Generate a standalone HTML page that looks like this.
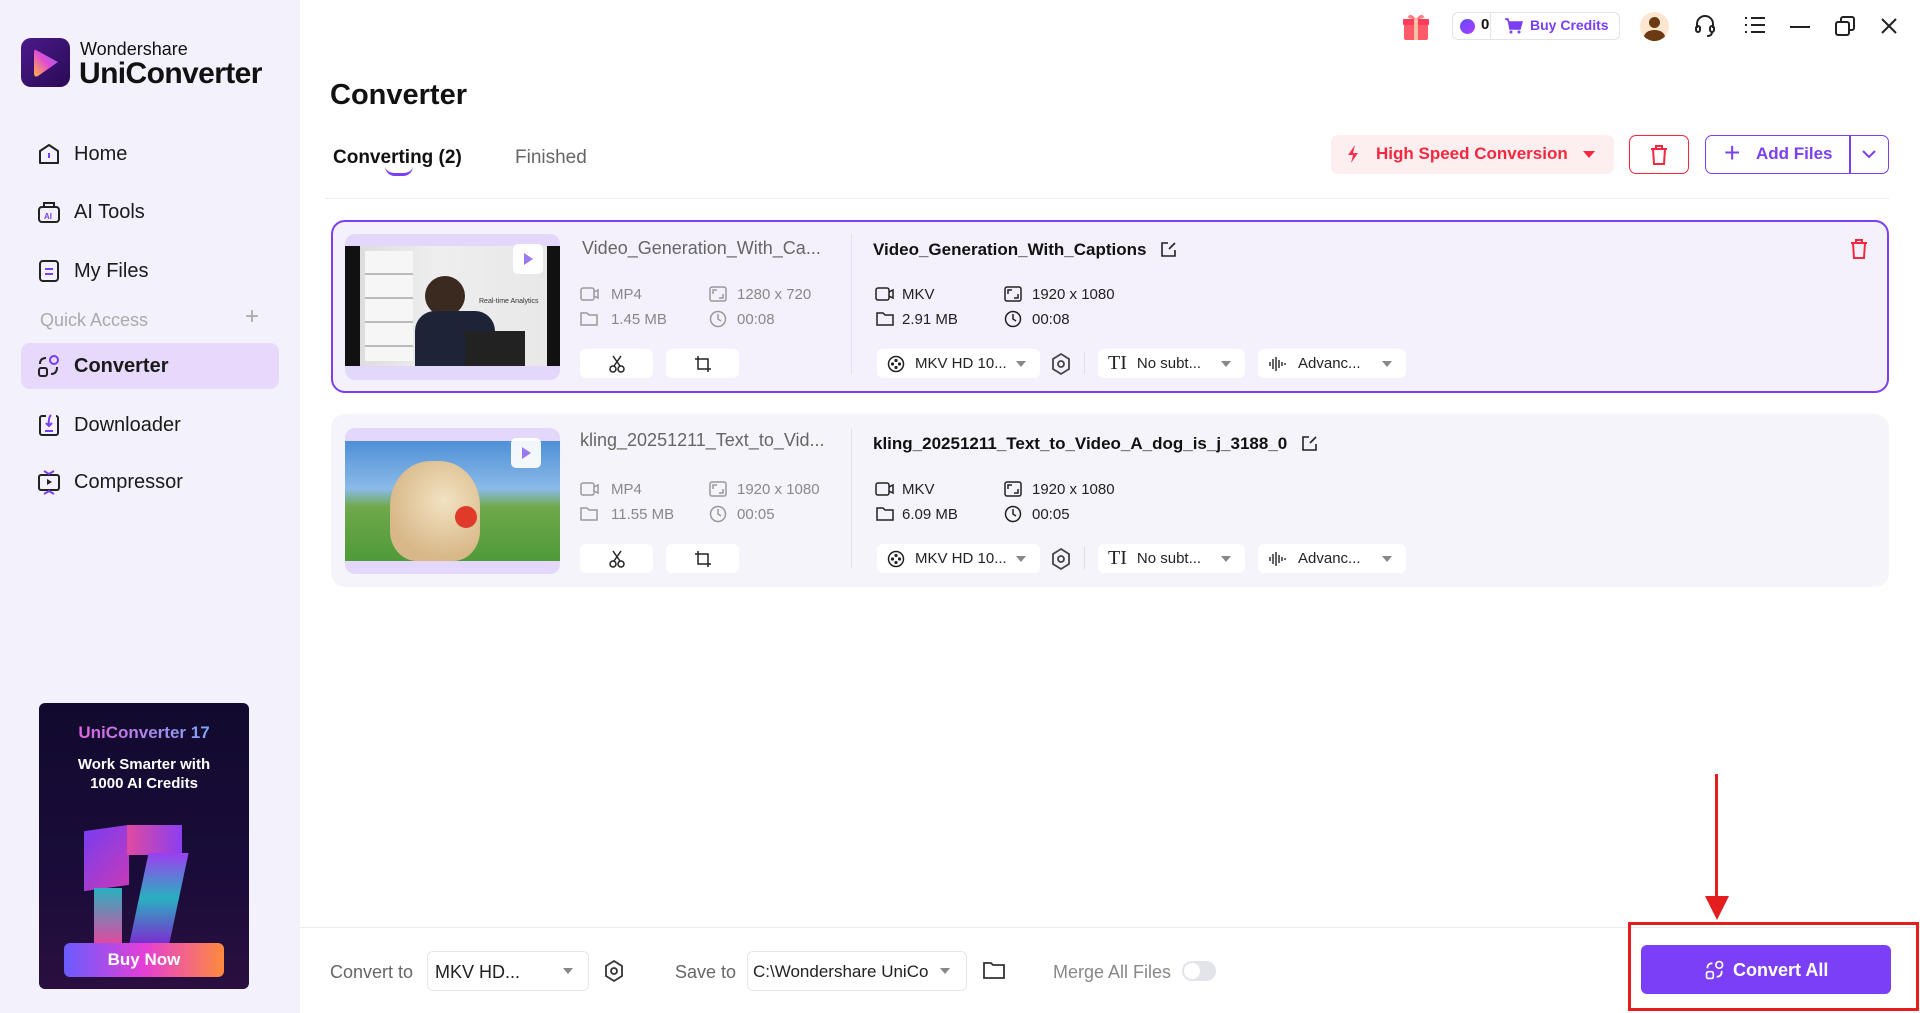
<!DOCTYPE html>
<html><head><meta charset="utf-8">
<style>
*{margin:0;padding:0;box-sizing:border-box}
body{width:1920px;height:1013px;overflow:hidden;background:#fff;font-family:"Liberation Sans","Noto Sans CJK SC",sans-serif;position:relative;color:#111}
.a{position:absolute}
.side{left:0;top:0;width:300px;height:1013px;background:#f3f1fb}
.nav{left:36px;font-size:20px;color:#1a1a1a;display:flex;align-items:center;gap:12px}
.nav svg{width:26px;height:26px}
.card{left:331px;width:1558px;height:173px;border-radius:14px;background:#f5f4fa}
.card.sel{background:#f4f1fd;border:2px solid #7b3ff2}
.thumb{left:14px;top:13px;width:215px;height:146px;border-radius:10px;background:#e3d8fb;overflow:hidden}
.src{font-size:18px;color:#666}
.tgt{font-size:17px;font-weight:bold;color:#111;display:flex;align-items:center;gap:12px;white-space:nowrap}
.meta{font-size:15px;color:#888}
.meta2{font-size:15px;color:#222}
.btn{background:#fff;border-radius:6px;height:29px;display:flex;align-items:center}
.dd{font-size:15px;color:#222;padding-left:10px;gap:10px}
.tri{width:0;height:0;border-left:5px solid transparent;border-right:5px solid transparent;border-top:6px solid #888;position:absolute;right:14px;top:12px}
.ic{stroke:#999;fill:none;stroke-width:1.5}
.ic2{stroke:#222;fill:none;stroke-width:1.5}
.play{width:30px;height:30px;border-radius:5px;background:rgba(255,255,255,.92)}
.play:after{content:"";position:absolute;left:11px;top:9px;border-top:6px solid transparent;border-bottom:6px solid transparent;border-left:9px solid #9b7af0}
</style></head><body>

<div class="a side"></div>
<div class="a" style="left:21px;top:38px;width:49px;height:49px;border-radius:10px;background:linear-gradient(135deg,#4a1a8a,#2a0a55)">
<svg width="49" height="49" viewBox="0 0 49 49"><defs><linearGradient id="lg" x1="0" y1="1" x2="1" y2="0"><stop offset="0" stop-color="#ffb340"/><stop offset=".5" stop-color="#e24fd0"/><stop offset="1" stop-color="#8a5cff"/></linearGradient></defs><path d="M15 12 L37 24 L17 38 Q13 40 13 35 L13 15 Q13 11 15 12Z" fill="url(#lg)"/></svg></div>
<div class="a" style="left:80px;top:39px;font-size:18px;color:#111">Wondershare</div>
<div class="a" style="left:79px;top:57px;font-size:30px;font-weight:bold;color:#111;letter-spacing:-0.6px">UniConverter</div>

<div class="a nav" style="top:141px"><svg viewBox="0 0 26 26"><path d="M4 10 L13 4 L22 10 L22 22 L4 22Z" fill="none" stroke="#222" stroke-width="2" stroke-linejoin="round"/><path d="M13 12v5" stroke="#7b3ff2" stroke-width="2"/></svg>Home</div>
<div class="a nav" style="top:199px"><svg viewBox="0 0 26 26"><rect x="3" y="8" width="20" height="15" rx="3" fill="none" stroke="#222" stroke-width="2"/><path d="M8 8V4h10v4" fill="none" stroke="#222" stroke-width="2"/><text x="8" y="20" font-size="8" fill="#7b3ff2" font-family="Liberation Sans" font-weight="bold">AI</text></svg>AI Tools</div>
<div class="a nav" style="top:258px"><svg viewBox="0 0 26 26"><rect x="4" y="3" width="18" height="20" rx="3" fill="none" stroke="#222" stroke-width="2"/><path d="M9 11h8M9 16h8" stroke="#7b3ff2" stroke-width="2"/></svg>My Files</div>
<div class="a" style="left:40px;top:310px;font-size:18px;color:#aaa">Quick Access</div>
<div class="a" style="left:245px;top:303px;font-size:24px;color:#aaa;font-weight:300">+</div>
<div class="a" style="left:21px;top:343px;width:258px;height:46px;border-radius:9px;background:#e6d9fb"></div>
<div class="a nav" style="top:353px;font-weight:bold"><svg viewBox="0 0 26 26"><circle cx="18" cy="7" r="4" fill="none" stroke="#7b3ff2" stroke-width="2"/><rect x="3" y="15" width="8" height="8" rx="2" fill="none" stroke="#222" stroke-width="2"/><path d="M4 11 Q4 5 10 5M21 14 Q21 21 15 21" fill="none" stroke="#222" stroke-width="2"/></svg>Converter</div>
<div class="a nav" style="top:412px"><svg viewBox="0 0 26 26"><path d="M10 4H6a2 2 0 0 0-2 2v15a2 2 0 0 0 2 2h14a2 2 0 0 0 2-2V6a2 2 0 0 0-2-2" fill="none" stroke="#222" stroke-width="2"/><path d="M15 3 Q12 6 13 13M10 11l3 3 3-3M9 19h8" fill="none" stroke="#7b3ff2" stroke-width="2"/></svg>Downloader</div>
<div class="a nav" style="top:469px"><svg viewBox="0 0 26 26"><rect x="3" y="6" width="20" height="15" rx="2" fill="none" stroke="#222" stroke-width="2"/><path d="M11 10l5 3-5 3z" fill="#222"/><path d="M8 2l5 3 5-3M8 25l5-3 5 3" fill="none" stroke="#7b3ff2" stroke-width="2"/></svg>Compressor</div>

<div class="a" style="left:39px;top:703px;width:210px;height:286px;border-radius:6px;background:linear-gradient(180deg,#120a2e 0%,#1a0c3a 60%,#2a0f40 100%);overflow:hidden">
<div class="a" style="left:0;width:210px;top:20px;text-align:center;font-size:17px;font-weight:bold;background:linear-gradient(90deg,#ff4fd8,#5fb8ff);-webkit-background-clip:text;color:transparent">UniConverter 17</div>
<div class="a" style="left:0;width:210px;top:52px;text-align:center;font-size:15px;font-weight:bold;color:#fff;line-height:19px">Work Smarter with<br>1000 AI Credits</div>
<div class="a" style="left:45px;top:125px;width:45px;height:60px;background:linear-gradient(135deg,#7a3df0,#c63ab8);transform:skewY(-8deg)"></div>
<div class="a" style="left:88px;top:122px;width:55px;height:30px;background:linear-gradient(90deg,#e04aa0,#8a3ff0)"></div>
<div class="a" style="left:100px;top:150px;width:40px;height:90px;background:linear-gradient(180deg,#9b3ff0,#2ab0c0,#7a2fd0);transform:skewX(-12deg)"></div>
<div class="a" style="left:55px;top:185px;width:28px;height:55px;background:linear-gradient(180deg,#2ab0c0,#e04aa0)"></div>
<div class="a" style="left:25px;top:240px;width:160px;height:34px;border-radius:6px;background:linear-gradient(90deg,#6a5cff,#e43fd6,#ff8a3d);color:#fff;font-weight:bold;font-size:17px;text-align:center;line-height:34px">Buy Now</div>
</div>

<svg class="a" style="left:1400px;top:10px" width="32" height="32" viewBox="0 0 32 32"><rect x="4" y="12" width="24" height="18" rx="2" fill="#ff5a6a"/><rect x="3" y="9" width="26" height="6" rx="1" fill="#ff3d5a"/><rect x="14" y="9" width="4" height="21" fill="#ffc0a0"/><path d="M16 9 Q10 2 8 7 Q9 9 16 9 Q22 2 24 7 Q23 9 16 9" fill="#ff7a7a"/></svg>
<div class="a" style="left:1452px;top:12px;width:168px;height:28px;border:1px solid #e3e3e8;border-radius:6px;background:#fff"></div>
<div class="a" style="left:1490px;top:13px;width:1px;height:26px;background:#e3e3e8"></div>
<div class="a" style="left:1460px;top:19px;width:15px;height:15px;border-radius:50%;background:linear-gradient(135deg,#5b4cff,#b13cff)"></div>
<div class="a" style="left:1481px;top:16px;font-size:15px;font-weight:bold">0</div>
<svg class="a" style="left:1504px;top:16px" width="20" height="20" viewBox="0 0 20 20"><path d="M1 3h3l2 10h10l2-7H5" fill="#7b3ff2" stroke="#7b3ff2" stroke-width="1.5"/><circle cx="7" cy="16" r="1.5" fill="#7b3ff2"/><circle cx="15" cy="16" r="1.5" fill="#7b3ff2"/></svg>
<div class="a" style="left:1530px;top:17px;font-size:14px;font-weight:bold;color:#7b3ff2">Buy Credits</div>
<div class="a" style="left:1640px;top:12px;width:29px;height:29px;border-radius:50%;background:#fde6d0;overflow:hidden"><div class="a" style="left:9px;top:5px;width:11px;height:11px;border-radius:50%;background:#6b3a12"></div><div class="a" style="left:4px;top:18px;width:21px;height:14px;border-radius:50%;background:#6b3a12"></div></div>
<svg class="a" style="left:1693px;top:13px" width="24" height="26" viewBox="0 0 24 26"><path d="M4 15V11a8 8 0 0 1 16 0v4" fill="none" stroke="#222" stroke-width="2"/><rect x="3" y="13" width="4" height="6" rx="2" fill="none" stroke="#222" stroke-width="2"/><rect x="17" y="13" width="4" height="6" rx="2" fill="none" stroke="#222" stroke-width="2"/><path d="M19 19 Q19 23 14 23" fill="none" stroke="#222" stroke-width="2"/></svg>
<svg class="a" style="left:1744px;top:15px" width="22" height="20" viewBox="0 0 22 20"><path d="M1 3h2M1 10h2M1 17h2M7 3h14M7 10h14M7 17h14" stroke="#222" stroke-width="2"/></svg>
<div class="a" style="left:1790px;top:26px;width:20px;height:2px;background:#222"></div>
<svg class="a" style="left:1834px;top:15px" width="22" height="22" viewBox="0 0 22 22"><rect x="2" y="7" width="13" height="13" rx="2" fill="none" stroke="#222" stroke-width="2"/><path d="M7 7V4a2 2 0 0 1 2-2h9a2 2 0 0 1 2 2v9a2 2 0 0 1-2 2h-3" fill="none" stroke="#222" stroke-width="2"/></svg>
<svg class="a" style="left:1880px;top:17px" width="18" height="18" viewBox="0 0 18 18"><path d="M2 2l14 14M16 2L2 16" stroke="#222" stroke-width="2"/></svg>

<div class="a" style="left:330px;top:79px;font-size:29px;font-weight:bold">Converter</div>
<div class="a" style="left:333px;top:147px;font-size:19px;font-weight:bold">Converting (2)</div>
<div class="a" style="left:385px;top:166px;width:28px;height:10px;border-bottom:3px solid #7b3ff2;border-radius:0 0 14px 14px"></div>
<div class="a" style="left:515px;top:147px;font-size:19px;color:#666">Finished</div>
<div class="a" style="left:325px;top:198px;width:1564px;height:1px;background:#ececf0"></div>

<div class="a" style="left:1331px;top:135px;width:283px;height:39px;border-radius:7px;background:#fdeff0"></div>
<svg class="a" style="left:1345px;top:144px" width="16" height="20" viewBox="0 0 16 20"><path d="M10 1L3 11h5l-2 8 7-10H8z" fill="#ff2e4d"/></svg>
<div class="a" style="left:1376px;top:144px;font-size:17px;font-weight:bold;color:#f5283f">High Speed Conversion</div>
<div class="a" style="left:1583px;top:151px;border-left:6px solid transparent;border-right:6px solid transparent;border-top:7px solid #f5283f"></div>
<div class="a" style="left:1629px;top:135px;width:60px;height:39px;border:1.5px solid #f5283f;border-radius:7px"></div>
<svg class="a" style="left:1648px;top:144px" width="22" height="22" viewBox="0 0 22 22"><path d="M3 5h16M8 5V2h6v3M5 5l1 15h10l1-15" fill="none" stroke="#f5283f" stroke-width="2"/></svg>
<div class="a" style="left:1705px;top:135px;width:184px;height:39px;border:1.5px solid #7b3ff2;border-radius:7px"></div>
<div class="a" style="left:1849px;top:136px;width:1.5px;height:37px;background:#7b3ff2"></div>
<div class="a" style="left:1724px;top:137px;font-size:28px;color:#7b3ff2">+</div>
<div class="a" style="left:1756px;top:144px;font-size:17px;font-weight:bold;color:#7b3ff2">Add Files</div>
<svg class="a" style="left:1861px;top:148px" width="16" height="12" viewBox="0 0 16 12"><path d="M2 3l6 6 6-6" fill="none" stroke="#7b3ff2" stroke-width="2"/></svg>

<div class="a card sel" style="top:220px">
 <div class="a thumb" style="left:12px;top:12px"><div class="a" style="left:0;top:12px;width:215px;height:120px;background:#111"><div class="a" style="left:15px;top:0;width:187px;height:120px;background:linear-gradient(90deg,#ddd 0,#eee 40%,#e8e8e8 100%)"></div><div class="a" style="left:20px;top:5px;width:48px;height:110px;background:repeating-linear-gradient(180deg,#f6f6f6 0 22px,#bbb 22px 24px)"></div><div class="a" style="left:80px;top:30px;width:40px;height:40px;border-radius:50%;background:#3a2a20"></div><div class="a" style="left:70px;top:65px;width:80px;height:55px;border-radius:20px 20px 0 0;background:#1e2438"></div><div class="a" style="left:120px;top:85px;width:60px;height:35px;background:#222"></div><div class="a" style="left:134px;top:52px;font-size:7px;color:#333">Real-time Analytics</div></div></div>
 <div class="a play" style="left:180px;top:22px"></div>
 <div class="a src" style="left:249px;top:16px">Video_Generation_With_Ca...</div>
</div>
<div class="a card" style="top:414px">
 <div class="a thumb" style="left:14px;top:14px"><div class="a" style="left:0;top:13px;width:215px;height:120px;background:linear-gradient(180deg,#4f8fd6 0,#8bbbe8 40%,#6fa84a 55%,#4f9a3a 100%)"><div class="a" style="left:45px;top:20px;width:90px;height:100px;border-radius:45% 45% 30% 30%;background:radial-gradient(circle at 60% 40%,#f2e2c2,#d8b888 70%)"></div><div class="a" style="left:110px;top:65px;width:22px;height:22px;border-radius:50%;background:#e03a2a"></div></div></div>
 <div class="a play" style="left:180px;top:24px"></div>
 <div class="a src" style="left:249px;top:16px">kling_20251211_Text_to_Vid...</div>
</div>

<div class="a" style="left:851px;top:234px;width:1px;height:140px;background:#e4e0ee"></div>
<div class="a" style="left:851px;top:428px;width:1px;height:140px;background:#e4e0ee"></div>
<div class="a tgt" style="left:873px;top:240px">Video_Generation_With_Captions<svg width="20" height="20" viewBox="0 0 20 20"><path d="M10 3H4v13h13v-6M11 9l6-6" fill="none" stroke="#222" stroke-width="1.6"/></svg></div>
<svg class="a" style="left:1849px;top:238px" width="20" height="22" viewBox="0 0 20 22"><path d="M2 5h16M7 5V2h6v3M4 5l1 15h10l1-15" fill="none" stroke="#f5283f" stroke-width="2"/></svg>
<div class="a tgt" style="left:873px;top:434px">kling_20251211_Text_to_Video_A_dog_is_j_3188_0<svg width="20" height="20" viewBox="0 0 20 20"><path d="M10 3H4v13h13v-6M11 9l6-6" fill="none" stroke="#222" stroke-width="1.6"/></svg></div>

<svg class="a ic" style="left:580px;top:286px" width="20" height="16" viewBox="0 0 20 16"><rect x="1" y="2" width="13" height="12" rx="2"/><path d="M14 6l4-2v8l-4-2"/></svg>
<div class="a meta" style="left:611px;top:286px">MP4</div>
<svg class="a ic" style="left:580px;top:310px" width="18" height="16" viewBox="0 0 18 16"><path d="M1 3h6l2 2h8v10H1z"/></svg>
<div class="a meta" style="left:611px;top:311px">1.45 MB</div>
<svg class="a ic" style="left:709px;top:286px" width="18" height="16" viewBox="0 0 18 16"><rect x="1" y="1" width="16" height="14" rx="2"/><path d="M4 8V4h4M14 8v4h-4"/></svg>
<div class="a meta" style="left:737px;top:286px">1280 x 720</div>
<svg class="a ic" style="left:709px;top:310px" width="18" height="18" viewBox="0 0 18 18"><circle cx="9" cy="9" r="7.5"/><path d="M9 4v5l3 2"/></svg>
<div class="a meta" style="left:737px;top:311px">00:08</div>
<svg class="a ic2" style="left:875px;top:286px" width="20" height="16" viewBox="0 0 20 16"><rect x="1" y="2" width="13" height="12" rx="2"/><path d="M14 6l4-2v8l-4-2"/></svg>
<div class="a meta2" style="left:902px;top:286px">MKV</div>
<svg class="a ic2" style="left:876px;top:310px" width="18" height="16" viewBox="0 0 18 16"><path d="M1 3h6l2 2h8v10H1z"/></svg>
<div class="a meta2" style="left:902px;top:311px">2.91 MB</div>
<svg class="a ic2" style="left:1004px;top:286px" width="18" height="16" viewBox="0 0 18 16"><rect x="1" y="1" width="16" height="14" rx="2"/><path d="M4 8V4h4M14 8v4h-4"/></svg>
<div class="a meta2" style="left:1032px;top:286px">1920 x 1080</div>
<svg class="a ic2" style="left:1004px;top:310px" width="18" height="18" viewBox="0 0 18 18"><circle cx="9" cy="9" r="7.5"/><path d="M9 4v5l3 2"/></svg>
<div class="a meta2" style="left:1032px;top:311px">00:08</div>

<div class="a btn" style="left:580px;top:349px;width:73px;justify-content:center"><svg width="18" height="18" viewBox="0 0 18 18"><circle cx="5" cy="14" r="3" fill="none" stroke="#222" stroke-width="1.5"/><circle cx="13" cy="14" r="3" fill="none" stroke="#222" stroke-width="1.5"/><path d="M6 11L13 1M12 11L5 1" stroke="#222" stroke-width="1.5"/></svg></div>
<div class="a btn" style="left:666px;top:349px;width:73px;justify-content:center"><svg width="18" height="18" viewBox="0 0 18 18"><path d="M4 1v13h13M1 4h13v13" fill="none" stroke="#222" stroke-width="1.5"/></svg></div>
<div class="a btn dd" style="left:877px;top:349px;width:163px"><svg width="18" height="18" viewBox="0 0 18 18"><circle cx="9" cy="9" r="7.5" fill="none" stroke="#222" stroke-width="1.5"/><circle cx="9" cy="5.5" r="1.6" fill="#222"/><circle cx="9" cy="12.5" r="1.6" fill="#222"/><circle cx="5.5" cy="9" r="1.6" fill="#222"/><circle cx="12.5" cy="9" r="1.6" fill="#222"/></svg>MKV HD 10...<div class="tri"></div></div>
<svg class="a" style="left:1050px;top:352px" width="22" height="24" viewBox="0 0 22 24"><path d="M11 2l8 5v10l-8 5-8-5V7z" fill="none" stroke="#444" stroke-width="1.8"/><circle cx="11" cy="12" r="3" fill="none" stroke="#444" stroke-width="1.8"/></svg>
<div class="a" style="left:1084px;top:352px;width:1px;height:22px;background:#e0dce8"></div>
<div class="a btn dd" style="left:1098px;top:349px;width:147px"><span style="font-size:20px;font-family:'Liberation Serif',serif">TI</span>No subt...<div class="tri"></div></div>
<div class="a btn dd" style="left:1258px;top:349px;width:148px"><svg width="20" height="16" viewBox="0 0 20 16"><path d="M2 6v4M5 3v10M8 1v14M11 4v8M14 6v4M17 7v2" stroke="#222" stroke-width="1.4"/></svg>Advanc...<div class="tri"></div></div>

<svg class="a ic" style="left:580px;top:481px" width="20" height="16" viewBox="0 0 20 16"><rect x="1" y="2" width="13" height="12" rx="2"/><path d="M14 6l4-2v8l-4-2"/></svg>
<div class="a meta" style="left:611px;top:481px">MP4</div>
<svg class="a ic" style="left:580px;top:505px" width="18" height="16" viewBox="0 0 18 16"><path d="M1 3h6l2 2h8v10H1z"/></svg>
<div class="a meta" style="left:611px;top:506px">11.55 MB</div>
<svg class="a ic" style="left:709px;top:481px" width="18" height="16" viewBox="0 0 18 16"><rect x="1" y="1" width="16" height="14" rx="2"/><path d="M4 8V4h4M14 8v4h-4"/></svg>
<div class="a meta" style="left:737px;top:481px">1920 x 1080</div>
<svg class="a ic" style="left:709px;top:505px" width="18" height="18" viewBox="0 0 18 18"><circle cx="9" cy="9" r="7.5"/><path d="M9 4v5l3 2"/></svg>
<div class="a meta" style="left:737px;top:506px">00:05</div>
<svg class="a ic2" style="left:875px;top:481px" width="20" height="16" viewBox="0 0 20 16"><rect x="1" y="2" width="13" height="12" rx="2"/><path d="M14 6l4-2v8l-4-2"/></svg>
<div class="a meta2" style="left:902px;top:481px">MKV</div>
<svg class="a ic2" style="left:876px;top:505px" width="18" height="16" viewBox="0 0 18 16"><path d="M1 3h6l2 2h8v10H1z"/></svg>
<div class="a meta2" style="left:902px;top:506px">6.09 MB</div>
<svg class="a ic2" style="left:1004px;top:481px" width="18" height="16" viewBox="0 0 18 16"><rect x="1" y="1" width="16" height="14" rx="2"/><path d="M4 8V4h4M14 8v4h-4"/></svg>
<div class="a meta2" style="left:1032px;top:481px">1920 x 1080</div>
<svg class="a ic2" style="left:1004px;top:505px" width="18" height="18" viewBox="0 0 18 18"><circle cx="9" cy="9" r="7.5"/><path d="M9 4v5l3 2"/></svg>
<div class="a meta2" style="left:1032px;top:506px">00:05</div>
<div class="a btn" style="left:580px;top:544px;width:73px;justify-content:center"><svg width="18" height="18" viewBox="0 0 18 18"><circle cx="5" cy="14" r="3" fill="none" stroke="#222" stroke-width="1.5"/><circle cx="13" cy="14" r="3" fill="none" stroke="#222" stroke-width="1.5"/><path d="M6 11L13 1M12 11L5 1" stroke="#222" stroke-width="1.5"/></svg></div>
<div class="a btn" style="left:666px;top:544px;width:73px;justify-content:center"><svg width="18" height="18" viewBox="0 0 18 18"><path d="M4 1v13h13M1 4h13v13" fill="none" stroke="#222" stroke-width="1.5"/></svg></div>
<div class="a btn dd" style="left:877px;top:544px;width:163px"><svg width="18" height="18" viewBox="0 0 18 18"><circle cx="9" cy="9" r="7.5" fill="none" stroke="#222" stroke-width="1.5"/><circle cx="9" cy="5.5" r="1.6" fill="#222"/><circle cx="9" cy="12.5" r="1.6" fill="#222"/><circle cx="5.5" cy="9" r="1.6" fill="#222"/><circle cx="12.5" cy="9" r="1.6" fill="#222"/></svg>MKV HD 10...<div class="tri"></div></div>
<svg class="a" style="left:1050px;top:547px" width="22" height="24" viewBox="0 0 22 24"><path d="M11 2l8 5v10l-8 5-8-5V7z" fill="none" stroke="#444" stroke-width="1.8"/><circle cx="11" cy="12" r="3" fill="none" stroke="#444" stroke-width="1.8"/></svg>
<div class="a" style="left:1084px;top:547px;width:1px;height:22px;background:#e0dce8"></div>
<div class="a btn dd" style="left:1098px;top:544px;width:147px"><span style="font-size:20px;font-family:'Liberation Serif',serif">TI</span>No subt...<div class="tri"></div></div>
<div class="a btn dd" style="left:1258px;top:544px;width:148px"><svg width="20" height="16" viewBox="0 0 20 16"><path d="M2 6v4M5 3v10M8 1v14M11 4v8M14 6v4M17 7v2" stroke="#222" stroke-width="1.4"/></svg>Advanc...<div class="tri"></div></div>

<div class="a" style="left:300px;top:927px;width:1620px;height:1px;background:#ececf0"></div>
<div class="a" style="left:330px;top:962px;font-size:18px;color:#666">Convert to</div>
<div class="a" style="left:427px;top:951px;width:162px;height:40px;border:1px solid #e6e6ea;border-radius:6px;background:#fff"></div>
<div class="a" style="left:435px;top:962px;font-size:18px;color:#222">MKV HD...</div>
<div class="a" style="left:563px;top:968px;border-left:5px solid transparent;border-right:5px solid transparent;border-top:6px solid #888"></div>
<svg class="a" style="left:603px;top:959px" width="22" height="24" viewBox="0 0 22 24"><path d="M11 2l8 5v10l-8 5-8-5V7z" fill="none" stroke="#333" stroke-width="1.8"/><circle cx="11" cy="12" r="3" fill="none" stroke="#333" stroke-width="1.8"/></svg>
<div class="a" style="left:675px;top:962px;font-size:18px;color:#666">Save to</div>
<div class="a" style="left:747px;top:951px;width:220px;height:40px;border:1px solid #e6e6ea;border-radius:6px;background:#fff"></div>
<div class="a" style="left:753px;top:962px;font-size:17px;color:#222;width:180px;overflow:hidden;white-space:nowrap">C:\Wondershare UniCo</div>
<div class="a" style="left:940px;top:968px;border-left:5px solid transparent;border-right:5px solid transparent;border-top:6px solid #888"></div>
<svg class="a" style="left:982px;top:960px" width="24" height="20" viewBox="0 0 24 20"><path d="M2 3h7l2 2h11v13H2z" fill="none" stroke="#333" stroke-width="1.8"/></svg>
<div class="a" style="left:1053px;top:962px;font-size:18px;color:#888">Merge All Files</div>
<div class="a" style="left:1182px;top:961px;width:34px;height:20px;border-radius:10px;background:#e3e3ea"><div class="a" style="left:2px;top:2px;width:16px;height:16px;border-radius:50%;background:#fff"></div></div>

<div class="a" style="left:1641px;top:945px;width:250px;height:49px;border-radius:6px;background:#7b3ff7"></div>
<svg class="a" style="left:1704px;top:959px" width="22" height="22" viewBox="0 0 26 26"><circle cx="18" cy="7" r="4" fill="none" stroke="#fff" stroke-width="2"/><rect x="3" y="15" width="8" height="8" rx="2" fill="none" stroke="#fff" stroke-width="2"/><path d="M4 11 Q4 5 10 5M21 14 Q21 21 15 21" fill="none" stroke="#fff" stroke-width="2"/></svg>
<div class="a" style="left:1733px;top:960px;font-size:18px;font-weight:bold;color:#fff">Convert All</div>
<div class="a" style="left:1628px;top:922px;width:291px;height:89px;border:3px solid #e41e1e"></div>
<div class="a" style="left:1715px;top:774px;width:3px;height:125px;background:#e41e1e"></div>
<div class="a" style="left:1705px;top:896px;border-left:12px solid transparent;border-right:12px solid transparent;border-top:24px solid #e41e1e"></div>
</body></html>
